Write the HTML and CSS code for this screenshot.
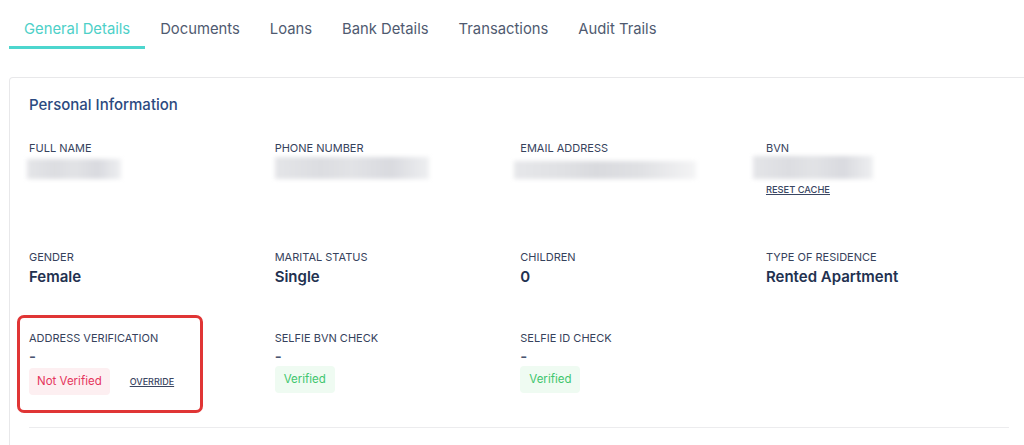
FILE: index.html
```html
<!DOCTYPE html>
<html lang="en">
<head>
<meta charset="utf-8">
<title>Customer – General Details</title>
<link rel="stylesheet" href="styles.css">
</head>
<body>
<nav class="tabs">
  <a class="tab tab--active">General Details</a>
  <a class="tab">Documents</a>
  <a class="tab">Loans</a>
  <a class="tab">Bank Details</a>
  <a class="tab">Transactions</a>
  <a class="tab">Audit Trails</a>
</nav>

<section class="card">
  <h2 class="card-title">Personal Information</h2>
  <div class="grid">
    <div class="field">
      <div class="label">Full Name</div>
      <div class="redacted redacted--name"></div>
    </div>
    <div class="field">
      <div class="label">Phone Number</div>
      <div class="redacted redacted--phone"></div>
    </div>
    <div class="field">
      <div class="label">Email Address</div>
      <div class="redacted redacted--email"></div>
    </div>
    <div class="field">
      <div class="label">BVN</div>
      <div class="redacted redacted--bvn"></div>
      <a class="link link--reset">Reset Cache</a>
    </div>

    <div class="field">
      <div class="label">Gender</div>
      <div class="value">Female</div>
    </div>
    <div class="field">
      <div class="label">Marital Status</div>
      <div class="value">Single</div>
    </div>
    <div class="field">
      <div class="label">Children</div>
      <div class="value">0</div>
    </div>
    <div class="field">
      <div class="label">Type of Residence</div>
      <div class="value">Rented Apartment</div>
    </div>

    <div class="field field--highlight">
      <div class="label">Address Verification</div>
      <div class="dash">-</div>
      <div class="status-row">
        <span class="badge badge--danger">Not Verified</span>
        <a class="link">Override</a>
      </div>
      <div class="annotation"></div>
    </div>
    <div class="field">
      <div class="label">Selfie BVN Check</div>
      <div class="dash">-</div>
      <div class="status-row">
        <span class="badge badge--success">Verified</span>
      </div>
    </div>
    <div class="field">
      <div class="label">Selfie ID Check</div>
      <div class="dash">-</div>
      <div class="status-row">
        <span class="badge badge--success">Verified</span>
      </div>
    </div>
  </div>
  <div class="divider"></div>
</section>
</body>
</html>
```

FILE: styles.css
```css
html, body {
  margin: 0;
  padding: 0;
  background: #ffffff;
  overflow: hidden;
}

body {
  font-family: Inter, "Noto Sans", "Liberation Sans", sans-serif;
  color: #2d3a55;
  width: 1024px;
  height: 445px;
}

.tabs {
  display: flex;
  padding-left: 9px;
}

.tab {
  display: block;
  padding: 19px 15px 7px;
  font-size: 14.8px;
  line-height: 20px;
  color: #4f5a70;
  border-bottom: 3px solid transparent;
  cursor: pointer;
}

.tab--active {
  color: #4dd0c8;
  border-bottom-color: #4dd6ce;
}

.card {
  margin: 28px 0 0 9px;
  height: 376px;
  border: 1px solid #e8e8ea;
  border-bottom: none;
  border-radius: 4px 4px 0 0;
  padding: 17px 19px 0;
  box-sizing: border-box;
  width: 1040px;
}

.card-title {
  margin: 0;
  font-size: 15px;
  line-height: 20px;
  font-weight: 500;
  color: #2b4a80;
}

.grid {
  margin-top: 25px;
  display: grid;
  grid-template-columns: repeat(4, 245.67px);
  row-gap: 43px;
  width: 983px;
}

.field {
  position: relative;
}

.label {
  font-size: 11px;
  line-height: 16px;
  text-transform: uppercase;
  color: #36425c;
}

.value {
  font-size: 15px;
  line-height: 21px;
  font-weight: 600;
  color: #223150;
  padding-top: 1px;
}

.dash {
  font-size: 15px;
  line-height: 22px;
  font-weight: 600;
  color: #4a5570;
}

.redacted {
  height: 20px;
  margin-top: 3px;
  background: linear-gradient(90deg, #e4e5e8 0%, #dcdde1 30%, #e2e3e6 50%, #d9dadf 75%, #eeeff1 100%);
  filter: blur(2px);
}

.redacted--name {
  width: 94px;
  margin-left: -2px;
}

.redacted--phone {
  width: 154px;
  margin-top: 1px;
  height: 22px;
}

.redacted--email {
  width: 182px;
  margin-left: -6px;
  margin-top: 5px;
  height: 18px;
  background: linear-gradient(90deg, #e6e7ea 0%, #dfe0e3 30%, #d9dade 45%, #e0e1e4 70%, #f4f4f5 100%);
}

.redacted--bvn {
  width: 120px;
  margin-left: -13px;
  margin-top: 0;
  height: 23px;
}

.link {
  font-size: 9px;
  line-height: 12px;
  font-weight: 500;
  text-transform: uppercase;
  text-decoration: underline;
  color: #3a4662;
  cursor: pointer;
}

.link--reset {
  display: block;
  margin-top: 5px;
  margin-bottom: 10px;
  font-size: 9.3px;
}

.status-row {
  display: flex;
  align-items: center;
  gap: 20px;
}

.badge {
  display: inline-block;
  height: 27px;
  line-height: 27px;
  padding: 0 9px;
  border-radius: 4px;
  font-size: 11.5px;
}

.badge--danger {
  background: #fdeff1;
  color: #e5345c;
  padding: 0 8px;
}

.badge--success {
  background: #effbf2;
  color: #3fc66e;
  margin-top: -2px;
}

.annotation {
  position: absolute;
  left: -12px;
  top: -15px;
  width: 186px;
  height: 98px;
  box-sizing: border-box;
  border: 3px solid #e03535;
  border-radius: 7px;
  pointer-events: none;
}

.divider {
  margin-top: 32px;
  width: 980px;
  border-top: 1px solid #ececee;
}
```
